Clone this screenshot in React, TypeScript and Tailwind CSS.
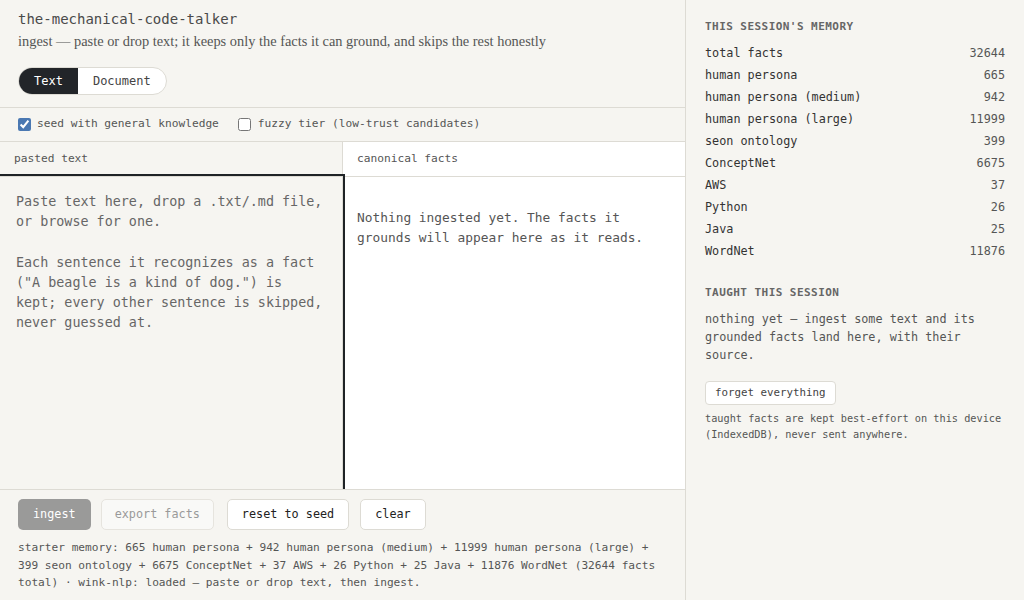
import { useState } from 'react'

const mono = 'font-["DejaVu_Sans_Mono",monospace]'

const memory: [string, number][] = [
  ['total facts', 32644],
  ['human persona', 665],
  ['human persona (medium)', 942],
  ['human persona (large)', 11999],
  ['seon ontology', 399],
  ['ConceptNet', 6675],
  ['AWS', 37],
  ['Python', 26],
  ['Java', 25],
  ['WordNet', 11876],
]

const placeholder =
  'Paste text here, drop a .txt/.md file,\nor browse for one.\n\nEach sentence it recognizes as a fact\n("A beagle is a kind of dog.") is\nkept; every other sentence is skipped,\nnever guessed at.'

export default function App() {
  const [mode, setMode] = useState<'text' | 'document'>('text')
  const [seed, setSeed] = useState(true)
  const [fuzzy, setFuzzy] = useState(false)
  const [input, setInput] = useState('')

  return (
    <div className={`flex h-screen w-full overflow-hidden bg-[#f6f5f1] text-[#333] ${mono}`}>
      {/* main column */}
      <div className="flex min-w-0 flex-1 flex-col">
        {/* header */}
        <div className="h-[108px] shrink-0 border-b border-[#dddbd4] px-[18px] pt-[9px]">
          <div className="text-[14px] leading-[20px] text-[#4a4a4a]">the-mechanical-code-talker</div>
          <div className='mt-[3px] font-["Liberation_Serif",serif] text-[14.4px] leading-[18px] text-[#555]'>
            ingest — paste or drop text; it keeps only the facts it can ground, and skips the rest honestly
          </div>
          <div className="mt-[17px] inline-flex h-[28px] overflow-hidden rounded-full border border-[#dddbd4] bg-white text-[12px]">
            <button
              onClick={() => setMode('text')}
              className={`px-[15px] ${mode === 'text' ? 'bg-[#222529] text-white' : 'text-[#444]'}`}
            >
              Text
            </button>
            <button
              onClick={() => setMode('document')}
              className={`px-[15px] ${mode === 'document' ? 'bg-[#222529] text-white' : 'text-[#444]'}`}
            >
              Document
            </button>
          </div>
        </div>

        {/* options */}
        <div className="flex h-[34px] shrink-0 items-center border-b border-[#dddbd4] px-[18px] text-[11.2px] text-[#555]">
          <label className="flex items-center gap-[6px]">
            <input
              type="checkbox"
              checked={seed}
              onChange={(e) => setSeed(e.target.checked)}
              className="m-0 h-[13px] w-[13px] accent-[#4a78b2]"
            />
            seed with general knowledge
          </label>
          <label className="ml-[19px] flex items-center gap-[7px]">
            <input
              type="checkbox"
              checked={fuzzy}
              onChange={(e) => setFuzzy(e.target.checked)}
              className="m-0 h-[13px] w-[13px] accent-[#4a78b2]"
            />
            fuzzy tier (low-trust candidates)
          </label>
        </div>

        {/* columns */}
        <div className="grid min-h-0 flex-1 grid-cols-[343px_1fr]">
          <div className="flex min-h-0 flex-col border-r border-[#dddbd4]">
            <div className="flex h-[35px] shrink-0 items-center border-b border-[#dddbd4] px-[14px] text-[11.2px] text-[#555]">
              pasted text
            </div>
            <textarea
              value={input}
              onChange={(e) => setInput(e.target.value)}
              placeholder={placeholder}
              className="relative z-10 min-h-0 flex-1 resize-none bg-transparent px-4 pt-[15px] text-[13.4px] leading-[20.2px] text-[#333] outline-2 outline-offset-1 outline-[#1f2326] placeholder:text-[#666]"
            />
          </div>
          <div className="flex min-h-0 flex-col bg-white">
            <div className="flex h-[35px] shrink-0 items-center border-b border-[#dddbd4] px-[14px] text-[11.2px] text-[#555]">
              canonical facts
            </div>
            <div className="px-[14px] pt-[31px] text-[12.85px] leading-[19.5px] text-[#555]">
              Nothing ingested yet. The facts it
              <br />
              grounds will appear here as it reads.
            </div>
          </div>
        </div>

        {/* actions */}
        <div className="relative z-20 h-[111px] shrink-0 border-t border-[#dddbd4] bg-[#f6f5f1] px-[18px] pt-[9px]">
          <div className="flex items-center text-[11.8px]">
            <button className="h-[31px] rounded-[5px] bg-[#9a9a99] px-[15px] text-white">ingest</button>
            <button
              disabled
              className="ml-[10px] h-[31px] rounded-[5px] border border-[#e6e4de] bg-[#f9f9f7] px-[13px] text-[#9a9a9a]"
            >
              export facts
            </button>
            <button className="ml-[13px] h-[31px] rounded-[5px] border border-[#dddbd4] bg-white px-[14px] text-[#222]">
              reset to seed
            </button>
            <button className="ml-[11px] h-[31px] rounded-[5px] border border-[#dddbd4] bg-white px-[14px] text-[#222]">
              clear
            </button>
          </div>
          <p className="mt-[9px] text-[11.15px] leading-[17.5px] text-[#555]">
            starter memory: 665 human persona + 942 human persona (medium) + 11999 human persona (large) +
            <br />
            399 seon ontology + 6675 ConceptNet + 37 AWS + 26 Python + 25 Java + 11876 WordNet (32644 facts
            <br />
            total) · wink-nlp: loaded — paste or drop text, then ingest.
          </p>
        </div>
      </div>

      {/* sidebar */}
      <aside className="w-[339px] shrink-0 border-l border-[#dddbd4] px-[19px] pt-[19px]">
        <h3 className="text-[11px] font-bold leading-[16px] tracking-[0.45px] text-[#666]">THIS SESSION'S MEMORY</h3>
        <div className="mt-[8px]">
          {memory.map(([label, n]) => (
            <div key={label} className="flex h-[22px] items-center justify-between text-[11.8px]">
              <span className="text-[#333]">{label}</span>
              <span className="text-[#555]">{n}</span>
            </div>
          ))}
        </div>

        <h3 className="mt-[22px] text-[11px] font-bold leading-[16px] tracking-[0.45px] text-[#666]">TAUGHT THIS SESSION</h3>
        <p className="mt-[9px] text-[11.8px] leading-[18px] text-[#555]">
          nothing yet — ingest some text and its grounded facts land here, with their source.
        </p>
        <button className="mt-[17px] h-[24px] rounded-[4px] border border-[#dddbd4] bg-white px-[9px] text-[10.8px] text-[#444]">
          forget everything
        </button>
        <p className="mt-[5px] text-[10.25px] leading-[16px] text-[#555]">
          taught facts are kept best-effort on this device (IndexedDB), never sent anywhere.
        </p>
      </aside>
    </div>
  )
}
